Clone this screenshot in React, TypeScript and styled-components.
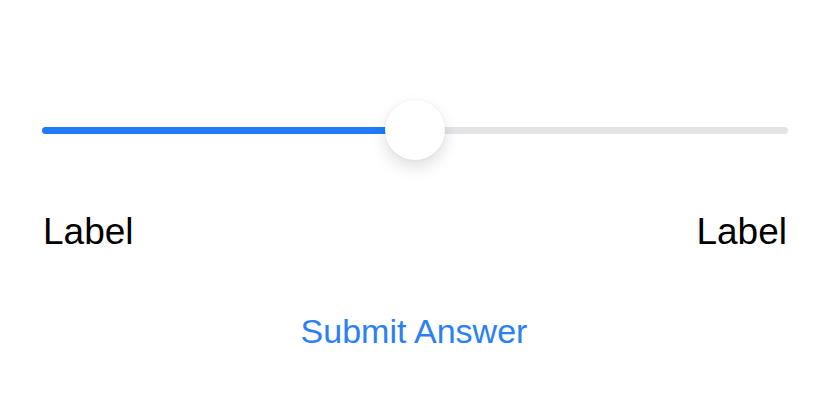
import React from "react";
import styled, { createGlobalStyle } from "styled-components";

const Global = createGlobalStyle`
  html, body { margin: 0; padding: 0; background: #ffffff; }
  body { font-family: "Liberation Sans", Arial, sans-serif; }
`;

const Page = styled.div`
  width: 831px;
  height: 413px;
  box-sizing: border-box;
  padding: 99px 43px 0 42px;
  display: flex;
  flex-direction: column;
`;

const SliderArea = styled.div`
  position: relative;
  height: 60px;
  display: flex;
  align-items: center;
`;

const Track = styled.div`
  position: relative;
  flex: 1;
  height: 7px;
  margin-top: 3px;
  border-radius: 4px;
  background: #e4e4e6;
`;

const Fill = styled.div`
  height: 100%;
  border-radius: 4px;
  background: #1f7bf6;
`;

const Knob = styled.div`
  position: absolute;
  top: -27px;
  width: 60px;
  height: 60px;
  margin-left: -30px;
  border-radius: 50%;
  background: #ffffff;
  box-shadow: 0 7px 16px rgba(0, 0, 0, 0.13), 0 0 3px rgba(0, 0, 0, 0.06);
`;

const LabelRow = styled.div`
  margin-top: 54px;
  display: flex;
  justify-content: space-between;
  padding: 0 1px 0 1px;
`;

const Label = styled.span`
  font-size: 37px;
  line-height: 37px;
  color: #000000;
`;

const Submit = styled.button`
  align-self: center;
  margin-top: 64px;
  margin-left: -2px;
  padding: 0;
  border: none;
  background: none;
  font-family: "Liberation Sans", Arial, sans-serif;
  font-size: 34px;
  line-height: 34px;
  color: #2a80f4;
  cursor: pointer;
`;

export default function App() {
  const value = 50;
  return (
    <>
      <Global />
      <Page>
        <SliderArea>
          <Track>
            <Fill style={{ width: `${value}%` }} />
            <Knob style={{ left: `${value}%` }} />
          </Track>
        </SliderArea>
        <LabelRow>
          <Label>Label</Label>
          <Label>Label</Label>
        </LabelRow>
        <Submit>Submit Answer</Submit>
      </Page>
    </>
  );
}
